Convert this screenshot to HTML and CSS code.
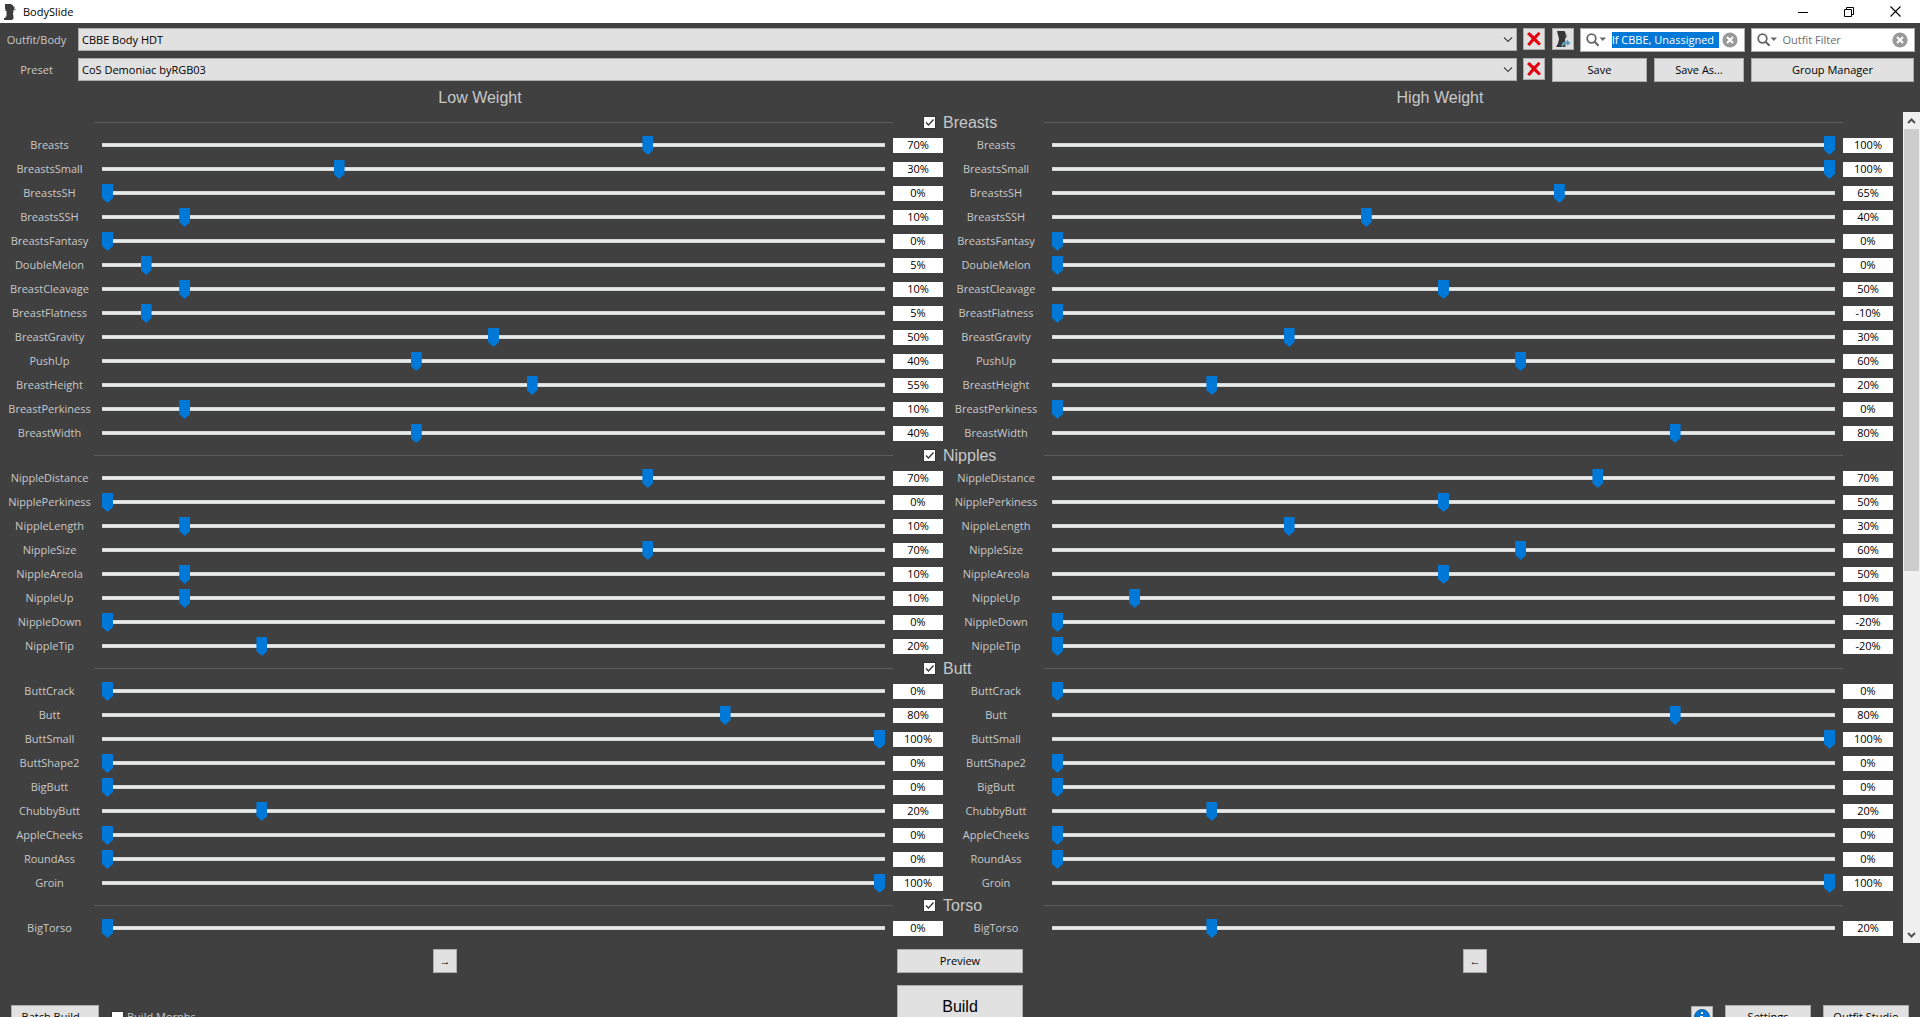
FILE: index.html
```html
<!DOCTYPE html>
<html lang="en">
<head>
<meta charset="utf-8">
<title>BodySlide</title>
<link rel="stylesheet" href="styles.css">
</head>
<body>
<svg class="symbols" aria-hidden="true">
  <symbol id="chevron" viewBox="0 0 10 6"><path d="M1 .5 5 4.500 9 .5" fill="none" stroke="#444" stroke-width="1.100"/></symbol>
  <symbol id="cross" viewBox="0 0 14 14"><path d="M0 2 2.400 0 7 4.200 11.400 0 13.500 1.800 9.200 6.600 14 11.800 11.800 13.600 7 9 2.600 14 .2 12.200 4.800 6.800Z" fill="#e3000f"/></symbol>
  <symbol id="find" viewBox="0 0 20 14"><circle cx="5.500" cy="5.500" r="4.300" fill="none" stroke="#666" stroke-width="1.800"/><path d="M8.600 8.800 12.600 12.800" stroke="#666" stroke-width="2"/><path d="M13.500 4.500H20L16.800 8Z" fill="#666"/></symbol>
  <symbol id="clear" viewBox="0 0 16 16"><circle cx="8" cy="8" r="7.600" fill="#999"/><path d="M5 5 11 11M11 5 5 11" stroke="#fff" stroke-width="2"/></symbol>
</svg>

<header class="titlebar">
  <svg class="app-icon" viewBox="0 0 12 16"><path d="M1 0H7.500V1H9V2.500H10.500V6H9.500V8.500H9V15H8.500V16H0V14H1.500V12.500H2.500V7H1.500V5H1Z" fill="#3c3c3c"/><path d="M10.500 5H12V6.500H10.500ZM9 11H10V15H9Z" fill="#aaa"/></svg>
  <h1 class="app-name">BodySlide</h1>
  <div class="window-controls">
    <button class="window-button" aria-label="Minimize"><svg width="10" height="11" viewBox="0 0 10 11"><path d="M0 6.500H10" stroke="#000"/></svg></button>
    <button class="window-button" aria-label="Restore"><svg width="10" height="11" viewBox="0 0 10 11"><path d="M.5 3.500H7.500V10.500H.5ZM2.500 3.500V1.500H9.500V8.500H7.500" fill="none" stroke="#000"/></svg></button>
    <button class="window-button" aria-label="Close"><svg width="11" height="11" viewBox="0 0 11 11"><path d="M.5 .5 10.500 10.500M10.500 .5 .5 10.500" stroke="#000" stroke-width="1.100"/></svg></button>
  </div>
</header>

<main class="window">
  <div class="toolbar">
    <label class="field-label" for="outfit">Outfit/Body</label>
    <div class="combo">
      <select id="outfit"><option>CBBE Body HDT</option></select>
      <svg class="combo-arrow"><use href="#chevron"/></svg>
    </div>
    <button class="icon-button" aria-label="Remove outfit"><svg width="14" height="14"><use href="#cross"/></svg></button>
    <div class="tools">
      <button class="icon-button" aria-label="Choose groups"><svg width="15" height="17" viewBox="0 0 15 17"><path d="M1 0H8.500L10 3 10.500 5 9 8.500 9.500 16H0L2 12.500 3 8Z" fill="#363636"/><path d="M9 3 11.500 5 10 6.500Z" fill="#888"/><path d="M5.500 15.500C5.500 11.500 7 10.500 10.500 10.800V8.500L14.500 12 11 15V13C8.500 12.800 8 13.500 7.500 15.500Z" fill="#5d9cbb"/></svg></button>
      <div class="search">
        <svg class="find"><use href="#find"/></svg>
        <input class="search-text selected" type="text" aria-label="Group filter" value="lf CBBE, Unassigned">
        <button class="clear" aria-label="Clear group filter"><svg width="16" height="16"><use href="#clear"/></svg></button>
      </div>
      <div class="search">
        <svg class="find"><use href="#find"/></svg>
        <input class="search-text" type="text" aria-label="Outfit filter" placeholder="Outfit Filter">
        <button class="clear" aria-label="Clear outfit filter"><svg width="16" height="16"><use href="#clear"/></svg></button>
      </div>
    </div>
  </div>
  <div class="toolbar">
    <label class="field-label" for="preset">Preset</label>
    <div class="combo">
      <select id="preset"><option>CoS Demoniac byRGB03</option></select>
      <svg class="combo-arrow"><use href="#chevron"/></svg>
    </div>
    <button class="icon-button" aria-label="Remove preset"><svg width="14" height="14"><use href="#cross"/></svg></button>
    <div class="tools actions">
      <button class="button">Save</button>
      <button class="button">Save As...</button>
      <button class="button">Group Manager</button>
    </div>
  </div>

  <div class="weights">
    <h2>Low Weight</h2>
    <h2>High Weight</h2>
  </div>

  <div class="scroll-area">
    <div class="sliders" id="sliders"></div>
    <div class="scrollbar">
      <button class="scroll-button" aria-label="Scroll up"><svg width="9" height="6" viewBox="0 0 9 6"><path d="M1 5 4.500 1.500 8 5" fill="none" stroke="#505050" stroke-width="2"/></svg></button>
      <div class="scroll-track"><div class="scroll-thumb"></div></div>
      <button class="scroll-button" aria-label="Scroll down"><svg width="9" height="6" viewBox="0 0 9 6"><path d="M1 1 4.500 4.500 8 1" fill="none" stroke="#505050" stroke-width="2"/></svg></button>
    </div>
  </div>

  <footer class="footer">
    <button class="button arrow" aria-label="Copy low weight to high weight">→</button>
    <button class="button">Preview</button>
    <button class="button arrow" aria-label="Copy high weight to low weight">←</button>
    <div class="footer-tools">
      <button class="button batch">Batch Build...</button>
      <label class="morphs"><input class="check" type="checkbox">Build Morphs</label>
    </div>
    <button class="button build">Build</button>
    <div class="footer-tools end">
      <button class="icon-button" aria-label="About"><svg width="16" height="16" viewBox="0 0 16 16"><circle cx="8" cy="8" r="7.500" fill="#0078d7" stroke="#1d5d99"/><path d="M7 3H9V5H7ZM6 7H9V12H10V13H6V12H7V8H6Z" fill="#fff"/></svg></button>
      <button class="button wide">Settings</button>
      <button class="button wide">Outfit Studio</button>
    </div>
  </footer>
</main>
<script src="sliders.js"></script>
</body>
</html>
```
FILE: styles.css
```css
* {
  box-sizing: border-box;
}

html,
body {
  height: 100%;
  margin: 0;
  overflow: hidden;
}

body {
  background: #404040;
  color: #c8c8c8;
  font: 11px/16px "Open Sans", "Noto Sans", sans-serif;
}

button,
input,
select {
  margin: 0;
  padding: 0;
  border: 0;
  border-radius: 0;
  color: #000;
  font: inherit;
}

button {
  display: flex;
  align-items: center;
  justify-content: center;
}

h1,
h2 {
  margin: 0;
  font-weight: 400;
}

.symbols {
  display: none;
}

/* Title bar */
.titlebar {
  display: flex;
  align-items: center;
  height: 23px;
  padding-left: 4px;
  background: #fff;
  color: #000;
}

.app-icon {
  width: 12px;
  height: 16px;
}

.app-name {
  margin-left: 7px;
  font-size: 11px;
}

.window-controls {
  display: flex;
  margin-left: auto;
  padding-right: 2px;
}

.window-button {
  width: 46px;
  height: 20px;
  background: none;
}

/* Toolbar */
.window {
  display: flex;
  flex-direction: column;
}

.toolbar {
  display: flex;
  height: 24px;
  margin-top: 5px;
  padding-right: 5px;
}

.toolbar + .toolbar {
  margin-top: 6px;
}

.field-label {
  width: 78px;
  padding: 4px 5px 0 0;
  text-align: center;
}

.combo {
  position: relative;
  flex: 1;
  height: 23px;
  margin-right: 6px;
}

.combo select {
  width: 100%;
  height: 100%;
  padding: 0 20px 0 3px;
  border: 1px solid #adadad;
  background: #e1e1e1;
  appearance: none;
}

.combo-arrow {
  position: absolute;
  top: 9px;
  right: 4px;
  width: 10px;
  height: 6px;
  pointer-events: none;
}

.icon-button,
.button {
  border: 1px solid #adadad;
  background: #e1e1e1;
}

.icon-button {
  flex: none;
  width: 22px;
  height: 22px;
}

.button {
  height: 24px;
}

.tools {
  display: flex;
  gap: 6px;
  width: 363px;
  margin-left: 7px;
}

.actions {
  display: grid;
  grid-template-columns: 95fr 90fr 163fr;
  gap: 7px;
  padding-right: 1px;
}

.search {
  display: flex;
  flex: 1;
  align-items: center;
  min-width: 0;
  padding: 0 6px 0 5px;
  border: 1px solid #adadad;
  background: #fff;
}

.find {
  flex: none;
  width: 20px;
  height: 14px;
}

.search-text {
  flex: 1;
  min-width: 0;
  height: 16px;
  margin: 0 3px 0 6px;
  background: none;
}

.search-text::placeholder {
  color: #6d6d6d;
}

.selected {
  background: #0078d7;
  color: #fff;
}

.clear {
  flex: none;
  background: none;
}

/* Weight headings */
.weights {
  display: grid;
  grid-template-columns: 1fr 1fr;
  height: 30px;
  padding-top: 6px;
  text-align: center;
}

.weights h2,
.category label {
  font: 16px/20px "Liberation Sans", Arial, sans-serif;
}

/* Slider list */
.scroll-area {
  display: flex;
}

.sliders {
  flex: 1;
  padding: 0 10px 3px 0;
}

.category {
  display: flex;
  align-items: center;
  height: 21px;
  padding: 0 50px 0 94px;
}

.category hr {
  flex: 1;
  height: 1px;
  margin: 0;
  border: 0;
  background: #5c5c5c;
}

.category label {
  display: flex;
  align-items: center;
  gap: 7px;
  width: 151px;
  padding-left: 30px;
}

.check {
  flex: none;
  width: 13px;
  height: 13px;
  border: 1px solid #333;
  background: #fff;
  appearance: none;
}

.tick {
  display: grid;
  width: 13px;
  height: 13px;
}

.tick > * {
  grid-area: 1 / 1;
}

.tick svg {
  z-index: 1;
  width: 13px;
  height: 13px;
  pointer-events: none;
}

.slider-row {
  display: grid;
  grid-template-columns: 102px 1fr 50px 109px 1fr 50px;
  align-items: center;
  height: 24px;
}

.slider-name {
  padding-right: 3px;
  text-align: center;
}

.slider {
  width: calc(100% - 8px);
  height: 24px;
  background: none;
  appearance: none;
}

.slider::-webkit-slider-runnable-track {
  height: 4px;
  background: #e7eaea;
  box-shadow: inset 0 0 0 1px #d6d6d6;
}

.slider::-webkit-slider-thumb {
  width: 11px;
  height: 19px;
  margin-top: -7px;
  background: #0078d7;
  clip-path: polygon(0 0, 100% 0, 100% 74%, 50% 100%, 0 74%);
  appearance: none;
}

.value {
  width: 50px;
  height: 15px;
  background: #fff;
  text-align: center;
}

/* Scroll bar */
.scrollbar {
  display: flex;
  flex-direction: column;
  width: 17px;
  background: #f0f0f0;
}

.scroll-button {
  height: 17px;
  background: none;
}

.scroll-track {
  flex: 1;
  padding: 0 1px;
}

.scroll-thumb {
  height: 55.4%;
  background: #cdcdcd;
}

/* Footer */
.footer {
  display: grid;
  grid-template-columns: 1fr 126px 1fr;
  gap: 12px 7px;
  padding-top: 6px;
}

.arrow {
  justify-self: center;
  width: 24px;
}

.build {
  height: 44px;
  font: 16px/20px "Liberation Sans", Arial, sans-serif;
}

.footer-tools {
  display: flex;
  align-items: center;
  gap: 12px;
  height: 24px;
  margin: 20px 11px 0;
}

.end {
  justify-content: flex-end;
}

.batch {
  width: 88px;
}

.wide {
  width: 86px;
}

.morphs {
  display: flex;
  align-items: center;
  gap: 3px;
}
```
FILE: sliders.js
```js
// Each slider: name, low weight, high weight (percent).
const categories = [
  ["Breasts", [
    ["Breasts", 70, 100], ["BreastsSmall", 30, 100], ["BreastsSH", 0, 65],
    ["BreastsSSH", 10, 40], ["BreastsFantasy", 0, 0], ["DoubleMelon", 5, 0],
    ["BreastCleavage", 10, 50], ["BreastFlatness", 5, -10], ["BreastGravity", 50, 30],
    ["PushUp", 40, 60], ["BreastHeight", 55, 20], ["BreastPerkiness", 10, 0],
    ["BreastWidth", 40, 80]
  ]],
  ["Nipples", [
    ["NippleDistance", 70, 70], ["NipplePerkiness", 0, 50], ["NippleLength", 10, 30],
    ["NippleSize", 70, 60], ["NippleAreola", 10, 50], ["NippleUp", 10, 10],
    ["NippleDown", 0, -20], ["NippleTip", 20, -20]
  ]],
  ["Butt", [
    ["ButtCrack", 0, 0], ["Butt", 80, 80], ["ButtSmall", 100, 100],
    ["ButtShape2", 0, 0], ["BigButt", 0, 0], ["ChubbyButt", 20, 20],
    ["AppleCheeks", 0, 0], ["RoundAss", 0, 0], ["Groin", 100, 100]
  ]],
  ["Torso", [["BigTorso", 0, 20]]]
];

const half = (name, weight, value) => {
  const id = `${weight}-${name}`;
  return `<label class="slider-name" for="${id}">${name}</label>
    <input class="slider" id="${id}" type="range" min="0" max="100" value="${value}">
    <input class="value" type="text" aria-label="${name} ${weight} weight" value="${value}%">`;
};

document.getElementById("sliders").innerHTML = categories.map(([title, sliders]) => `
  <div class="category">
    <hr>
    <label><span class="tick"><input class="check" type="checkbox" checked><svg viewBox="0 0 13 13"><path d="M3 6.500 5.500 9 10.500 3.500" fill="none" stroke="#333" stroke-width="1.300"/></svg></span>${title}</label>
    <hr>
  </div>
  ${sliders.map(([name, low, high]) =>
    `<div class="slider-row">${half(name, "low", low)}${half(name, "high", high)}</div>`).join("")}
`).join("");
```
